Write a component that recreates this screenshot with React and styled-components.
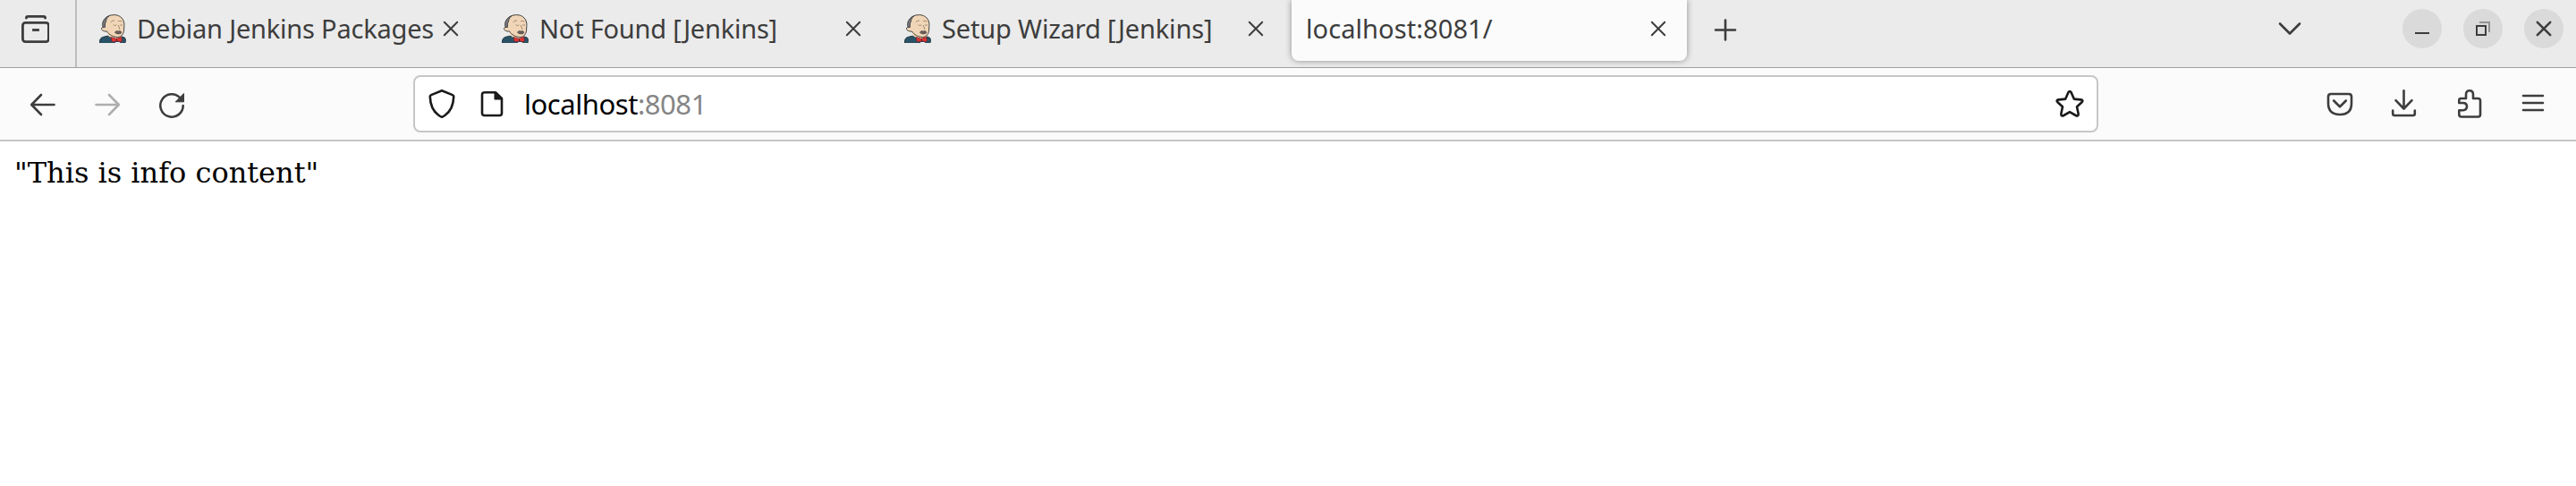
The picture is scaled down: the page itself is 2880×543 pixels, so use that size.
import React from 'react';
import styled, { createGlobalStyle } from 'styled-components';

const GlobalStyle = createGlobalStyle`
  * { box-sizing: border-box; }
  body { margin: 0; background: #fff; }
`;

const Browser = styled.div`
  display: flex;
  flex-direction: column;
  height: 543px;
  background: #fff;
  color: #3d3d3d;
  font-family: "Noto Sans", "Open Sans", sans-serif;
  overflow: hidden;
`;

const TabStrip = styled.header`
  display: flex;
  height: 76px;
  background: #ebebeb;
  border-bottom: 1px solid #a0a0a0;
`;

const ViewButton = styled.button`
  display: flex;
  width: 86px;
  height: 75px;
  padding: 16px 0 0 23px;
  border: 0;
  border-right: 2px solid #bdbdbd;
  background: none;
  color: inherit;
`;

const Tabs = styled.nav`
  display: flex;
  padding-left: 4px;
`;

const Tab = styled.div`
  display: flex;
  align-items: center;
  width: 442px;
  height: 68px;
  margin: 0 4px;
  padding: 0 16px 4px;
  border-radius: 0 0 8px 8px;
  background: ${(p) => (p.$active ? '#fbfbfb' : 'transparent')};
  box-shadow: ${(p) => (p.$active ? '0 0 7px rgba(0, 0, 0, 0.4)' : 'none')};
`;

const TabTitle = styled.span`
  flex: 1;
  margin-left: ${(p) => (p.$icon ? '11px' : '0')};
  font-size: 29px;
  line-height: 40px;
  letter-spacing: ${(p) => p.$spacing}px;
  white-space: nowrap;
`;

const CloseSlot = styled.span`
  display: flex;
  width: 32px;
  flex: none;
`;

const NewTab = styled.button`
  display: flex;
  width: 78px;
  height: 66px;
  align-items: center;
  justify-content: center;
  border: 0;
  padding: 0;
  background: none;
  color: inherit;
`;

const WindowControls = styled.div`
  display: flex;
  align-items: center;
  height: 64px;
  margin-left: auto;
  padding-right: 14px;
  gap: 24px;
`;

const TabMenu = styled.span`
  display: flex;
  margin-right: 86px;
`;

const RoundButton = styled.button`
  display: flex;
  width: 44px;
  height: 44px;
  align-items: center;
  justify-content: center;
  padding: 0;
  border: 0;
  border-radius: 50%;
  background: #dadada;
  color: inherit;
`;

const Toolbar = styled.div`
  display: flex;
  align-items: center;
  height: 82px;
  padding: 0 12px;
  background: #fbfbfb;
  border-bottom: 2px solid #c6c6c6;
`;

const ToolButton = styled.button`
  display: flex;
  width: 72px;
  height: 64px;
  align-items: center;
  justify-content: center;
  padding: 0;
  border: 0;
  background: none;
  color: #3d3d3d;
  opacity: ${(p) => (p.$disabled ? 0.4 : 1)};
`;

const AddressBar = styled.div`
  display: flex;
  align-items: center;
  width: 1884px;
  height: 64px;
  margin-left: 234px;
  padding: 0 14px;
  border: 2px solid #c6c6c6;
  border-radius: 8px;
  background: #fff;
  color: #1a1a1a;
`;

const PageIcon = styled.span`
  display: flex;
  margin-left: 24px;
`;

const Address = styled.span`
  flex: 1;
  margin-left: 20px;
  font-size: 31px;
  line-height: 42px;
  letter-spacing: -0.45px;
  color: #000;
`;

const Port = styled.span`
  color: #858585;
`;

const Actions = styled.div`
  display: flex;
  margin-left: auto;
`;

const Page = styled.main`
  flex: 1;
  padding: 16px;
  color: #000;
  font-family: "DejaVu Serif", serif;
  font-size: 32px;
  line-height: 38px;
`;

const Glyph = styled.svg`
  display: block;
  width: 32px;
  height: 32px;
  flex: none;
  fill: none;
  stroke: currentColor;
  stroke-width: ${(p) => p.$weight || 2.6};
  stroke-linecap: round;
  stroke-linejoin: round;
`;

const Icon = ({ weight, children }) => (
  <Glyph viewBox="0 0 32 32" $weight={weight}>{children}</Glyph>
);

const CloseIcon = ({ weight = 2 }) => (
  <Icon weight={weight}><path d="M8.800 8.800l14.400 14.400M23.200 8.800L8.800 23.200" /></Icon>
);

const Butler = () => (
  <Glyph viewBox="0 0 32 32" $weight={0.9}>
    <path d="M1.500 32q-.5-5 3-6.500l5-1.200 17 .7q4 .5 4 3.500l-.5 3.500z" fill="#2a5266" stroke="#1d303a" />
    <path d="M9 20l3 5 9 3 5-3-2-3z" fill="#f0d6b7" stroke="none" />
    <path d="M6 14.500C4.500 9 7 .6 17.500.6 25 .6 29.300 6 28.900 12.500L28.600 17c0 4.500-2.600 8.500-7.100 8.500-4.500 0-9.500-2.500-12-6.500-3 .5-5.500-1-6-2.500-.3-1.500 1-2.500 2.500-2z" fill="#f0d6b7" stroke="#303030" />
    <path d="M5 14C3.500 10 5.500 4 12 1.800 9.500 4 8.500 6 8.500 8.500L7.500 10v4z" fill="#76767a" stroke="#46464a" />
    <path d="M14 8.500q1.500-2 3.500-1.500M22.500 7.500q2-.8 3.500.5M17 12q1.500 1.200 3 .2M24.500 12q1 .8 2.200 0M22.500 12.500l1.300 4" stroke="#8a7560" strokeWidth=".8" />
    <path d="M18.500 20q1.500-2.200 3.700-1 1.800-1.500 3.800 1l-1 1.500q-2.500.8-4.500.2z" fill="#69605c" stroke="#403a38" strokeWidth=".6" />
    <path d="M14.500 25.500l5.500 1.800 6-2v5.500l-5-1-5.500.9z" fill="#e03434" stroke="#86252a" strokeWidth=".7" />
    <path d="M20.500 27.500v2.500" stroke="#601e23" />
    <path d="M19.500 31.500h4" stroke="#fff" />
  </Glyph>
);

const tabs = [
  { title: 'Debian Jenkins Packages', spacing: -0.2, icon: true },
  { title: 'Not Found [Jenkins]', spacing: -0.22, icon: true },
  { title: 'Setup Wizard [Jenkins]', spacing: -0.16, icon: true },
  { title: 'localhost:8081/', spacing: 0.08, active: true },
];

export default function App() {
  return (
    <Browser>
      <GlobalStyle />
      <TabStrip>
        <ViewButton aria-label="View">
          <Icon weight={2.8}>
            <path d="M6.400 4.200q0-1.800 2-1.800h17.200q2 0 2 1.800" />
            <rect x="2.400" y="9.400" width="29" height="21.200" rx="3" />
            <path d="M14.500 17.500h5" strokeLinecap="square" />
          </Icon>
        </ViewButton>
        <Tabs>
          {tabs.map((tab) => (
            <Tab key={tab.title} $active={tab.active}>
              {tab.icon && <Butler />}
              <TabTitle $icon={tab.icon} $spacing={tab.spacing}>{tab.title}</TabTitle>
              <CloseSlot><CloseIcon /></CloseSlot>
            </Tab>
          ))}
        </Tabs>
        <NewTab aria-label="New tab"><Icon><path d="M16 5.500v22M5 16.500h22" /></Icon></NewTab>
        <WindowControls>
          <TabMenu><Icon><path d="M5 10.500l11 11 11-11" /></Icon></TabMenu>
          <RoundButton aria-label="Minimize">
            <Icon weight={2}><path d="M8 21h16" strokeLinecap="butt" /></Icon>
          </RoundButton>
          <RoundButton aria-label="Restore">
            <Icon weight={2}>
              <path d="M12 9h11v11" stroke="#939393" strokeLinecap="butt" strokeLinejoin="miter" />
              <rect x="9" y="13" width="10" height="10" strokeLinejoin="miter" />
            </Icon>
          </RoundButton>
          <RoundButton aria-label="Close"><CloseIcon weight={2.6} /></RoundButton>
        </WindowControls>
      </TabStrip>
      <Toolbar>
        <ToolButton aria-label="Back"><Icon><path d="M28.500 17H3.500M14 6L3.200 17 14 28" /></Icon></ToolButton>
        <ToolButton aria-label="Forward" $disabled><Icon><path d="M3.500 17h25M18 6l10.800 11L18 28" /></Icon></ToolButton>
        <ToolButton aria-label="Reload">
          <Icon>
            <path d="M25.500 9.500A12.700 12.700 0 1 0 28.700 18" />
            <path d="M29.500 4.800v9h-9z" fill="currentColor" strokeWidth="1" />
          </Icon>
        </ToolButton>
        <AddressBar>
          <Icon>
            <path d="M16 1.300l12 4.800q1.300.5 1.200 2-.4 14-9.600 20.700-2 1.500-3.600 2-1.600-.5-3.600-2Q3.200 22.100 2.800 8.100q-.1-1.500 1.200-2z" />
          </Icon>
          <PageIcon>
            <Icon>
              <path d="M8 3.200h12L27 10v16.500q0 2.500-2.500 2.500H7.500Q5 29 5 26.500v-21q0-2.300 3-2.300z" />
              <path d="M19 3.500V11h7.500z" fill="currentColor" strokeWidth="1" />
            </Icon>
          </PageIcon>
          <Address>localhost<Port>:8081</Port></Address>
          <Icon>
            <path d="M14.400 3.300q1.600-2.600 3.200 0l3.200 7.300 7.500.8q3.300.5 1.200 2.800l-5.500 5.100 1.600 7.600q.3 3.500-2.800 2.100L16 25.100 9.200 29q-3.100 1.400-2.800-2.100L8 19.300l-5.500-5.100q-2.100-2.300 1.200-2.800l7.500-.8z" />
          </Icon>
        </AddressBar>
        <Actions>
          <ToolButton aria-label="Save to Pocket">
            <Icon><path d="M6 5h20q3 0 3 3v7.500Q29 28 16 28T3 15.500V8q0-3 3-3zM9.200 12.500l6.800 6.700 6.800-6.700" /></Icon>
          </ToolButton>
          <ToolButton aria-label="Downloads">
            <Icon><path d="M15.500 1.300v20M6.500 12.200l9 9.300 9-9.300M3.200 23.500V27q0 2 2 2h20.600q2 0 2-2v-3.500" /></Icon>
          </ToolButton>
          <ToolButton aria-label="Extensions">
            <Icon>
              <path d="M7.500 10h5.500V5.500q0-4.200 4-4.200t4 4.200V10h5.500q2.500 0 2.500 2.500V28q0 2.500-2.500 2.500H8q-2.700 0-2.700-2.500v-4.800h4.200q4.500 0 4.500-4.100T9.500 15H5.300v-3q0-2 2.200-2z" />
            </Icon>
          </ToolButton>
          <ToolButton aria-label="Menu">
            <Icon><path d="M5 7h22M5 15h22M5 23h22" /></Icon>
          </ToolButton>
        </Actions>
      </Toolbar>
      <Page>"This is info content"</Page>
    </Browser>
  );
}
